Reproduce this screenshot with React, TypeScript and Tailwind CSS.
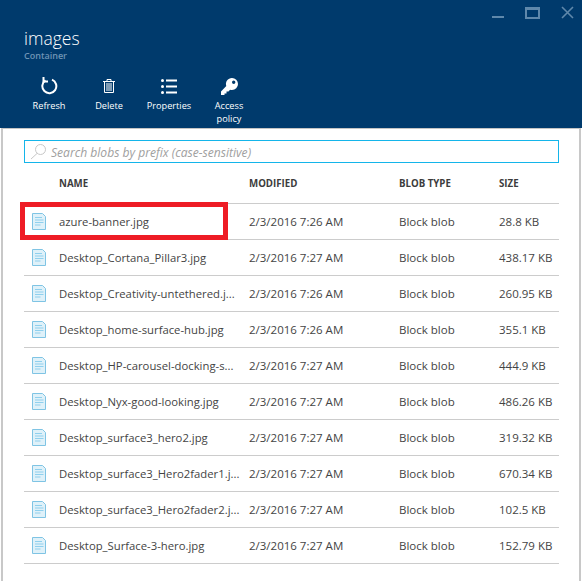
const BLOBS = [
  ['azure-banner.jpg', '2/3/2016 7:26 AM', '28.8 KB'],
  ['Desktop_Cortana_Pillar3.jpg', '2/3/2016 7:27 AM', '438.17 KB'],
  ['Desktop_Creativity-untethered.j...', '2/3/2016 7:26 AM', '260.95 KB'],
  ['Desktop_home-surface-hub.jpg', '2/3/2016 7:26 AM', '355.1 KB'],
  ['Desktop_HP-carousel-docking-s...', '2/3/2016 7:27 AM', '444.9 KB'],
  ['Desktop_Nyx-good-looking.jpg', '2/3/2016 7:27 AM', '486.26 KB'],
  ['Desktop_surface3_hero2.jpg', '2/3/2016 7:27 AM', '319.32 KB'],
  ['Desktop_surface3_Hero2fader1.j...', '2/3/2016 7:27 AM', '670.34 KB'],
  ['Desktop_surface3_Hero2fader2.j...', '2/3/2016 7:27 AM', '102.5 KB'],
  ['Desktop_Surface-3-hero.jpg', '2/3/2016 7:27 AM', '152.79 KB'],
]

function FileIcon() {
  return (
    <svg width="14" height="17" viewBox="0 0 14 17" className="shrink-0">
      <path d="M.5.5h10l3 3v13H.5z" fill="#dff1f9" stroke="#7fc4e4" />
      <path d="M3 4.500h7M3 7h8.500M3 9.500h8.500M3 12h5.500" stroke="#8fd0ee" strokeWidth="1.200" />
    </svg>
  )
}

function ToolButton({ label, icon }: { label: React.ReactNode; icon: React.ReactNode }) {
  return (
    <div className="w-[60px] flex flex-col items-center text-center text-white text-[9.200px] leading-[13px]">
      <div className="h-[20px] flex items-center justify-center mb-[3px]">{icon}</div>
      {label}
    </div>
  )
}

export default function App() {
  return (
    <div className="w-[582px] h-[581px] overflow-hidden bg-white font-['Open_Sans',sans-serif] flex flex-col">
      <header className="relative h-[128px] shrink-0 bg-[#003a6c] pl-[24px] pt-[27px]">
        <div className="absolute top-[6px] right-[8px] flex items-center gap-[21px] text-[#5f88ab]">
          <div className="w-[12px] h-[2px] bg-current mt-[9px]" />
          <div className="w-[15px] h-[12px] border-2 border-t-[3px] border-current" />
          <svg width="13" height="13" viewBox="0 0 13 13" stroke="currentColor" strokeWidth="1.600">
            <path d="M1 1l11 11M12 1L1 12" />
          </svg>
        </div>
        <div className="text-white text-[17.500px] leading-[22px] font-light">images</div>
        <div className="text-[#6f94b5] text-[9px] leading-[12px] font-semibold mt-[1px]">Container</div>
        <div className="flex ml-[-5px] mt-[14px]">
          <ToolButton
            label="Refresh"
            icon={
              <svg width="18" height="18" viewBox="0 0 18 18" fill="none" stroke="#fff" strokeWidth="2">
                <path d="M5.500 3.300A7 7 0 1 0 12 2.700" />
                <path d="M3.500 0v4.500H8" />
              </svg>
            }
          />
          <ToolButton
            label="Delete"
            icon={
              <svg width="12" height="14" viewBox="0 0 12 14" fill="none" stroke="#fff">
                <path d="M0 2.500h12M4 2V.500h4V2" />
                <path d="M1.500 3v10.500h9V3M4 4v8M6 4v8M8 4v8" />
              </svg>
            }
          />
          <ToolButton
            label="Properties"
            icon={
              <svg width="16" height="15" viewBox="0 0 16 15" fill="#fff">
                <circle cx="1.500" cy="1.500" r="1.500" />
                <circle cx="1.500" cy="7.500" r="1.500" />
                <circle cx="1.500" cy="13.500" r="1.500" />
                <path d="M5 .5h11v2H5zM5 6.500h11v2H5zM5 12.500h11v2H5z" />
              </svg>
            }
          />
          <ToolButton
            label={<>Access<br />policy</>}
            icon={
              <svg width="17" height="17" viewBox="0 0 17 17" fill="#fff">
                <path fillRule="evenodd" d="M11 0a6 6 0 0 1 0 12c-.7 0-1.300-.1-1.900-.3L7.500 13.500H5.500V15.500H3.500V17H0v-3.500l5.300-5.400A6 6 0 0 1 11 0zm1.700 2.500a1.700 1.700 0 1 0 0 3.400 1.700 1.700 0 0 0 0-3.400z" />
              </svg>
            }
          />
        </div>
      </header>

      <main className="flex-1 border-t border-t-[#c4c4c4] border-l-2 border-l-[#c8c8c8] border-r-2 border-r-[#c8c8c8] mx-[1px] pl-[21px] pr-[20px] pt-[11px] relative">
        <div className="h-[23px] border border-[#14b5ea] flex items-center pl-[5px] gap-[4px]">
          <svg width="17" height="17" viewBox="0 0 17 17" fill="none" stroke="#c8c8c8" className="shrink-0">
            <circle cx="10.500" cy="6.500" r="5" />
            <path d="M7 10.500L1 16" />
          </svg>
          <span className="italic text-[12.100px] leading-[16px] mt-[2px] text-[#a0a0a0]">Search blobs by prefix (case-sensitive)</span>
        </div>

        <div className="h-[40px] pt-[2px] flex items-center text-[9.700px] font-bold text-[#3c3c3c]">
          <div className="w-[225px] pl-[35px]">NAME</div>
          <div className="w-[150px]">MODIFIED</div>
          <div className="w-[100px]">BLOB TYPE</div>
          <div className="flex-1">SIZE</div>
        </div>

        <div className="border-t border-[#cccccc]">
          {BLOBS.map(([name, date, size]) => (
            <div key={name} className="h-[36px] flex items-center border-b border-[#cccccc] text-[11.500px] text-[#444444]">
              <div className="w-[225px] pl-[8px] flex items-center gap-[13px] whitespace-nowrap text-[11.300px]">
                <FileIcon />
                <span className="pt-[2px]">{name}</span>
              </div>
              <div className="w-[150px]">{date}</div>
              <div className="w-[100px]">Block blob</div>
              <div className="flex-1">{size}</div>
            </div>
          ))}
        </div>

        <div className="absolute left-[17px] top-[73px] w-[208px] h-[38px] border-[5px] border-[#ee1c25]" />
      </main>
    </div>
  )
}
